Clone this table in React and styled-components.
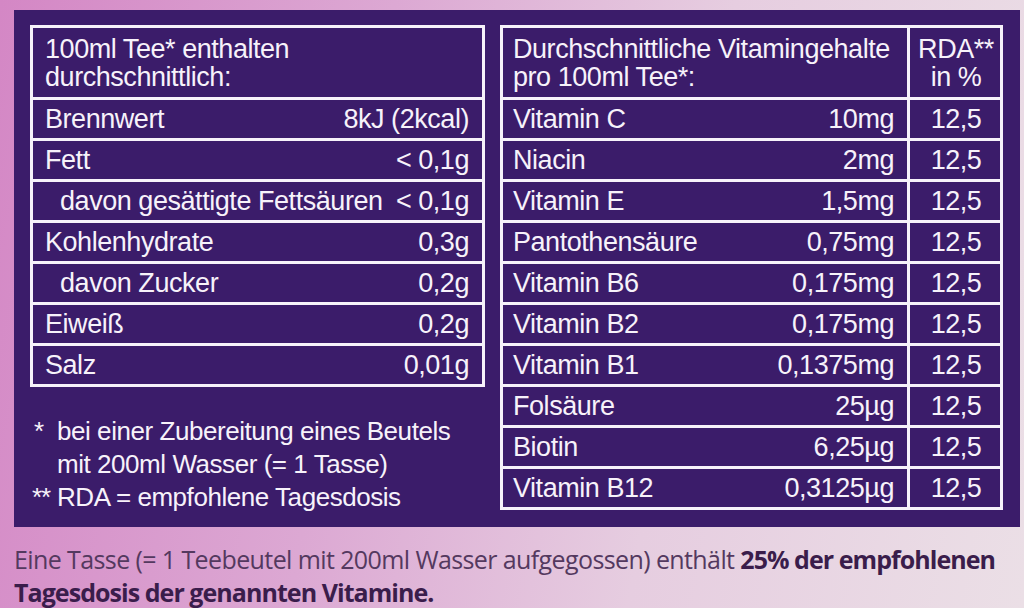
import React from 'react';
import styled, { createGlobalStyle } from 'styled-components';

const GlobalStyle = createGlobalStyle`
    html, body {
        margin: 0;
        padding: 0;
    }
    body {
        width: 1024px;
        height: 608px;
        overflow: hidden;
        background: linear-gradient(100deg, #d487c5 0%, #dca8d3 35%, #e6cde0 65%, #ebdfe6 100%);
        font-family: 'Liberation Sans', Arial, sans-serif;
    }
`;

const Page = styled.div`
    display: flex;
    flex-direction: column;
    padding: 10px 4px 0 14px;
`;

const Panel = styled.section`
    display: flex;
    flex-direction: column;
    height: 517px;
    box-sizing: border-box;
    padding: 15px 17px 0 16px;
    background: #3b1c6a;
    color: #f7f2fa;
`;

const Columns = styled.div`
    display: flex;
    gap: 15px;
    align-items: flex-start;
`;

const LeftColumn = styled.div`
    display: flex;
    flex-direction: column;
    width: 455px;
`;

const Table = styled.div`
    display: flex;
    flex-direction: column;
    width: ${p => p.$width}px;
    border: 3px solid #f7f2fa;
    box-sizing: border-box;
`;

const Row = styled.div`
    display: flex;
    height: ${p => (p.$head ? 69 : 38)}px;
    border-top: ${p => (p.$head ? 0 : 3)}px solid #f7f2fa;
    box-sizing: content-box;
`;

const Cell = styled.div`
    flex: 1;
    display: flex;
    align-items: center;
    justify-content: space-between;
    padding: 0 13px 0 ${p => p.$pad}px;
    font-size: 27px;
    line-height: 28px;
    letter-spacing: -0.45px;
    white-space: nowrap;
`;

const HeadText = styled.div`
    white-space: normal;
`;

const RdaCell = styled.div`
    width: 93px;
    border-left: 3px solid #f7f2fa;
    display: flex;
    align-items: center;
    justify-content: center;
    text-align: center;
    font-size: 27px;
    line-height: 28px;
    letter-spacing: -0.45px;
    padding-left: 2px;
    box-sizing: border-box;
`;

const Notes = styled.div`
    display: grid;
    grid-template-columns: 27px 1fr;
    margin-top: 28px;
    font-size: 26px;
    line-height: 33px;
    letter-spacing: -0.45px;
`;

const Mark = styled.span`
    padding-left: ${p => p.$pad}px;
    letter-spacing: -1px;
`;

const Footer = styled.p`
    margin: 16px 0 0;
    font-family: 'Open Sans', 'Noto Sans', sans-serif;
    font-stretch: 90%;
    font-size: 25px;
    line-height: 33px;
    letter-spacing: -0.6px;
    color: #54395f;
    white-space: nowrap;

    b {
        color: #3a1d4b;
        font-weight: 700;
        letter-spacing: -0.95px;
    }
`;

const nutrition = [
    ['Brennwert', '8kJ (2kcal)', 12],
    ['Fett', '< 0,1g', 12],
    ['davon gesättigte Fettsäuren', '< 0,1g', 27],
    ['Kohlenhydrate', '0,3g', 12],
    ['davon Zucker', '0,2g', 27],
    ['Eiweiß', '0,2g', 12],
    ['Salz', '0,01g', 12],
];

const vitamins = [
    ['Vitamin C', '10mg'],
    ['Niacin', '2mg'],
    ['Vitamin E', '1,5mg'],
    ['Pantothensäure', '0,75mg'],
    ['Vitamin B6', '0,175mg'],
    ['Vitamin B2', '0,175mg'],
    ['Vitamin B1', '0,1375mg'],
    ['Folsäure', '25µg'],
    ['Biotin', '6,25µg'],
    ['Vitamin B12', '0,3125µg'],
];

const App = () => {
    return (
        <Page>
            <GlobalStyle />
            <Panel>
                <Columns>
                    <LeftColumn>
                        <Table $width={455}>
                            <Row $head>
                                <Cell $pad={12}>
                                    <HeadText>100ml Tee* enthalten<br />durchschnittlich:</HeadText>
                                </Cell>
                            </Row>
                            {nutrition.map(([name, value, pad]) => (
                                <Row key={name}>
                                    <Cell $pad={pad}>
                                        <span>{name}</span>
                                        <span>{value}</span>
                                    </Cell>
                                </Row>
                            ))}
                        </Table>
                        <Notes>
                            <Mark $pad={4}>*</Mark>
                            <span>bei einer Zubereitung eines Beutels<br />mit 200ml Wasser (= 1 Tasse)</span>
                            <Mark $pad={2}>**</Mark>
                            <span>RDA = empfohlene Tagesdosis</span>
                        </Notes>
                    </LeftColumn>
                    <Table $width={503}>
                        <Row $head>
                            <Cell $pad={10}>
                                <HeadText>Durchschnittliche Vitamingehalte<br />pro 100ml Tee*:</HeadText>
                            </Cell>
                            <RdaCell>RDA**<br />in %</RdaCell>
                        </Row>
                        {vitamins.map(([name, value]) => (
                            <Row key={name}>
                                <Cell $pad={10}>
                                    <span>{name}</span>
                                    <span>{value}</span>
                                </Cell>
                                <RdaCell>12,5</RdaCell>
                            </Row>
                        ))}
                    </Table>
                </Columns>
            </Panel>
            <Footer>
                Eine Tasse (= 1 Teebeutel mit 200ml Wasser aufgegossen) enthält <b>25% der empfohlenen</b>
                <br />
                <b>Tagesdosis der genannten Vitamine.</b>
            </Footer>
        </Page>
    );
};

export default App;
